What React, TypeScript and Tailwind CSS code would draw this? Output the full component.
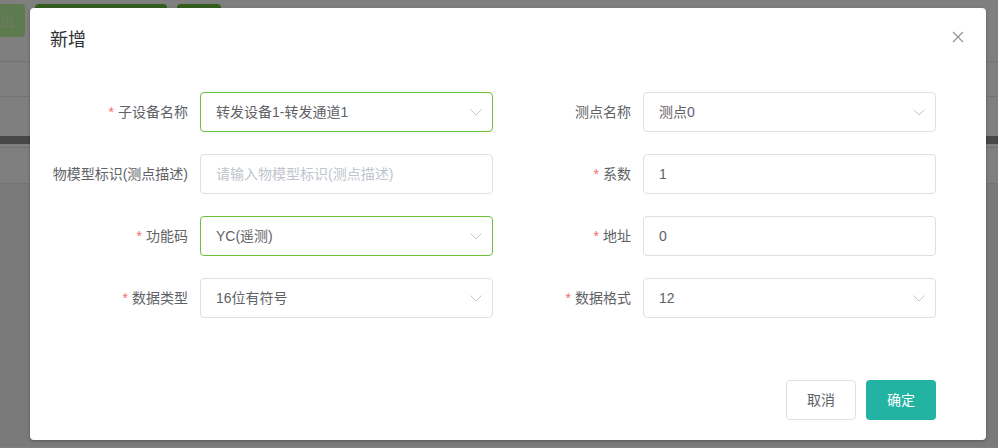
import React, { FC } from "react";

type Field = {
  label: string;
  required?: boolean;
  value?: string;
  placeholder?: string;
  select?: boolean;
  focused?: boolean;
};

const leftFields: Field[] = [
  { label: "子设备名称", required: true, value: "转发设备1-转发通道1", select: true, focused: true },
  { label: "物模型标识(测点描述)", placeholder: "请输入物模型标识(测点描述)" },
  { label: "功能码", required: true, value: "YC(遥测)", select: true, focused: true },
  { label: "数据类型", required: true, value: "16位有符号", select: true },
];

const rightFields: Field[] = [
  { label: "测点名称", value: "测点0", select: true },
  { label: "系数", required: true, value: "1" },
  { label: "地址", required: true, value: "0" },
  { label: "数据格式", required: true, value: "12", select: true },
];

const Chevron = () => (
  <svg width="14" height="14" viewBox="0 0 14 14" fill="none">
    <path d="M1.5 4.5 L7 10 L12.5 4.5" stroke="#c0c4cc" strokeWidth="1" />
  </svg>
);

const FormItem: FC<{ f: Field }> = ({ f }) => (
  <div className="flex items-center h-10 mb-[22px]">
    <label className="w-[150px] pr-3 text-right text-sm text-[#606266] leading-10 whitespace-nowrap">
      {f.required && <span className="text-[#f56c6c] mr-1">*</span>}
      {f.label}
    </label>
    <div
      className={
        "w-[293px] h-10 rounded border flex items-center pl-[15px] pr-[9px] text-sm " +
        (f.focused ? "border-[#67c23a]" : "border-[#dcdfe6]")
      }
    >
      <span className={"flex-1 truncate " + (f.value ? "text-[#606266]" : "text-[#c0c4cc]")}>
        {f.value || f.placeholder}
      </span>
      {f.select && <Chevron />}
    </div>
  </div>
);

export default function App() {
  return (
    <div
      className="relative w-[998px] h-[448px] overflow-hidden bg-white"
      style={{ fontFamily: '"Liberation Sans", "Noto Sans CJK SC", sans-serif' }}
    >
      {/* page underneath */}
      <div className="flex items-start gap-[10px] pt-[4px]">
        <div className="h-[33px] w-[25px] rounded-r bg-[#bdf49f] text-[#dff5d3] text-sm flex items-center">出</div>
        <div className="h-[33px] w-[132px] rounded bg-[#67bb3e]"></div>
        <div className="h-[33px] w-[44px] rounded bg-[#67bb3e]"></div>
      </div>
      <div className="mt-[24px] border-t border-[#e6e6e6]"></div>
      <div className="mt-[34px] border-t border-[#e6e6e6]"></div>
      <div className="mt-[39px] h-[8px] bg-[#8e8e8e]"></div>
      <div className="mt-[3px] border-t border-[#e6e6e6]"></div>
      <div className="mt-[35px] border-t border-[#e6e6e6]"></div>
      <div className="h-[263px] bg-[#f5f5f5]"></div>

      {/* mask */}
      <div className="absolute inset-0 bg-black/50"></div>

      {/* dialog */}
      <div className="absolute left-[30px] top-[8px] w-[956px] bg-white rounded-sm shadow-[0_1px_3px_rgba(0,0,0,0.3)]">
        <div className="flex items-center justify-between px-5 pt-5 pb-[10px]">
          <span className="text-lg leading-6 text-[#303133]">新增</span>
          <svg width="12" height="12" viewBox="0 0 12 12" className="mr-[2px] -mt-[6px]">
            <path d="M1 1 L11 11 M11 1 L1 11" stroke="#909399" strokeWidth="1.2" />
          </svg>
        </div>
        <div className="px-5 pt-[30px] pb-[30px] grid grid-cols-[443px_443px]">
          <div>
            {leftFields.map((f) => (
              <FormItem key={f.label} f={f} />
            ))}
          </div>
          <div>
            {rightFields.map((f) => (
              <FormItem key={f.label} f={f} />
            ))}
          </div>
        </div>
        <div className="flex justify-end gap-[10px] pt-[10px] pb-5 pr-[50px]">
          <button className="w-[70px] h-10 rounded border border-[#dcdfe6] text-sm text-[#606266] bg-white">取消</button>
          <button className="w-[70px] h-10 rounded bg-[#23b3a2] text-sm text-white">确定</button>
        </div>
      </div>
    </div>
  );
}
